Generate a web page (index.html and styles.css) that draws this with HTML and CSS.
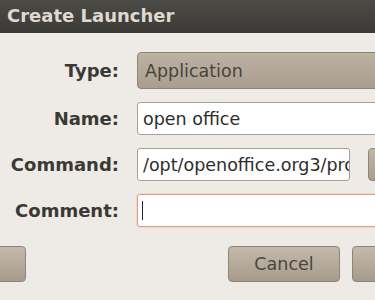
FILE: index.html
```html
<!DOCTYPE html>
<html>
<head>
<meta charset="utf-8">
<link rel="stylesheet" href="styles.css">
</head>
<body>
<div class="dialog">
  <div class="titlebar">Create Launcher</div>
  <div class="form">
    <div class="label">Type:</div>
    <div class="combo">Application</div>
    <div class="label">Name:</div>
    <div class="entry">open office</div>
    <div class="label">Command:</div>
    <div class="cmd-row">
      <div class="entry cmd">/opt/openoffice.org3/program/soffice</div>
      <div class="browse"></div>
    </div>
    <div class="label">Comment:</div>
    <div class="entry focused"><span class="caret"></span></div>
  </div>
  <div class="actions">
    <div class="btn help"></div>
    <div class="spacer"></div>
    <div class="btn">Cancel</div>
    <div class="btn"></div>
  </div>
</div>
</body>
</html>
```
FILE: styles.css
```css
html, body {
  margin: 0;
  padding: 0;
  background: #eeebe6;
  overflow: hidden;
  width: 375px;
  height: 300px;
}
.dialog {
  width: 520px;
  font-family: "DejaVu Sans", sans-serif;
}
.titlebar {
  height: 33px;
  background: linear-gradient(#4c4b46, #3b3a36);
  color: #dedad2;
  font-weight: bold;
  font-size: 18px;
  padding-left: 7px;
  display: flex;
  align-items: center;
  box-sizing: border-box;
  padding-bottom: 2px;
}
.form {
  display: grid;
  grid-template-columns: 119px 1fr;
  column-gap: 18px;
  row-gap: 13px;
  padding-top: 19px;
}
.label {
  justify-self: end;
  align-self: center;
  font-weight: bold;
  font-size: 18px;
  color: #3a3935;
}
.combo {
  height: 37px;
  box-sizing: border-box;
  border: 1px solid #8f8576;
  border-radius: 4px;
  background: linear-gradient(#bcb2a3, #a99e8e);
  color: #48433d;
  font-size: 17.5px;
  padding-left: 7px;
  display: flex;
  align-items: center;
}
.entry {
  height: 33px;
  box-sizing: border-box;
  border: 1px solid #a6a197;
  border-radius: 3px;
  background: #fff;
  color: #2e2d2a;
  font-size: 17.5px;
  padding-left: 5px;
  display: flex;
  align-items: center;
  white-space: nowrap;
  overflow: hidden;
}
.cmd-row {
  display: flex;
  gap: 18px;
}
.entry.cmd {
  width: 213px;
  flex: none;
}
.browse {
  height: 33px;
  width: 100px;
  box-sizing: border-box;
  border: 1px solid #8f8576;
  border-radius: 4px;
  background: linear-gradient(#c0b7a9, #a89d8d);
}
.entry.focused {
  border-color: #dd9d89;
  box-shadow: 0 0 0 1px rgba(240, 180, 160, 0.35);
}
.caret {
  display: block;
  width: 1px;
  height: 19px;
  background: #222;
  margin-left: -1px;
}
.actions {
  display: flex;
  gap: 12px;
  margin-top: 19px;
  align-items: center;
}
.btn {
  height: 36px;
  width: 112px;
  box-sizing: border-box;
  border: 1px solid #8f8576;
  border-radius: 4px;
  background: linear-gradient(#c3baac, #a79c8b);
  color: #4a453f;
  font-size: 17.5px;
  display: flex;
  align-items: center;
  justify-content: center;
  flex: none;
}
.btn.help {
  margin-left: -86px;
}
.spacer {
  width: 178px;
  flex: none;
}
```
